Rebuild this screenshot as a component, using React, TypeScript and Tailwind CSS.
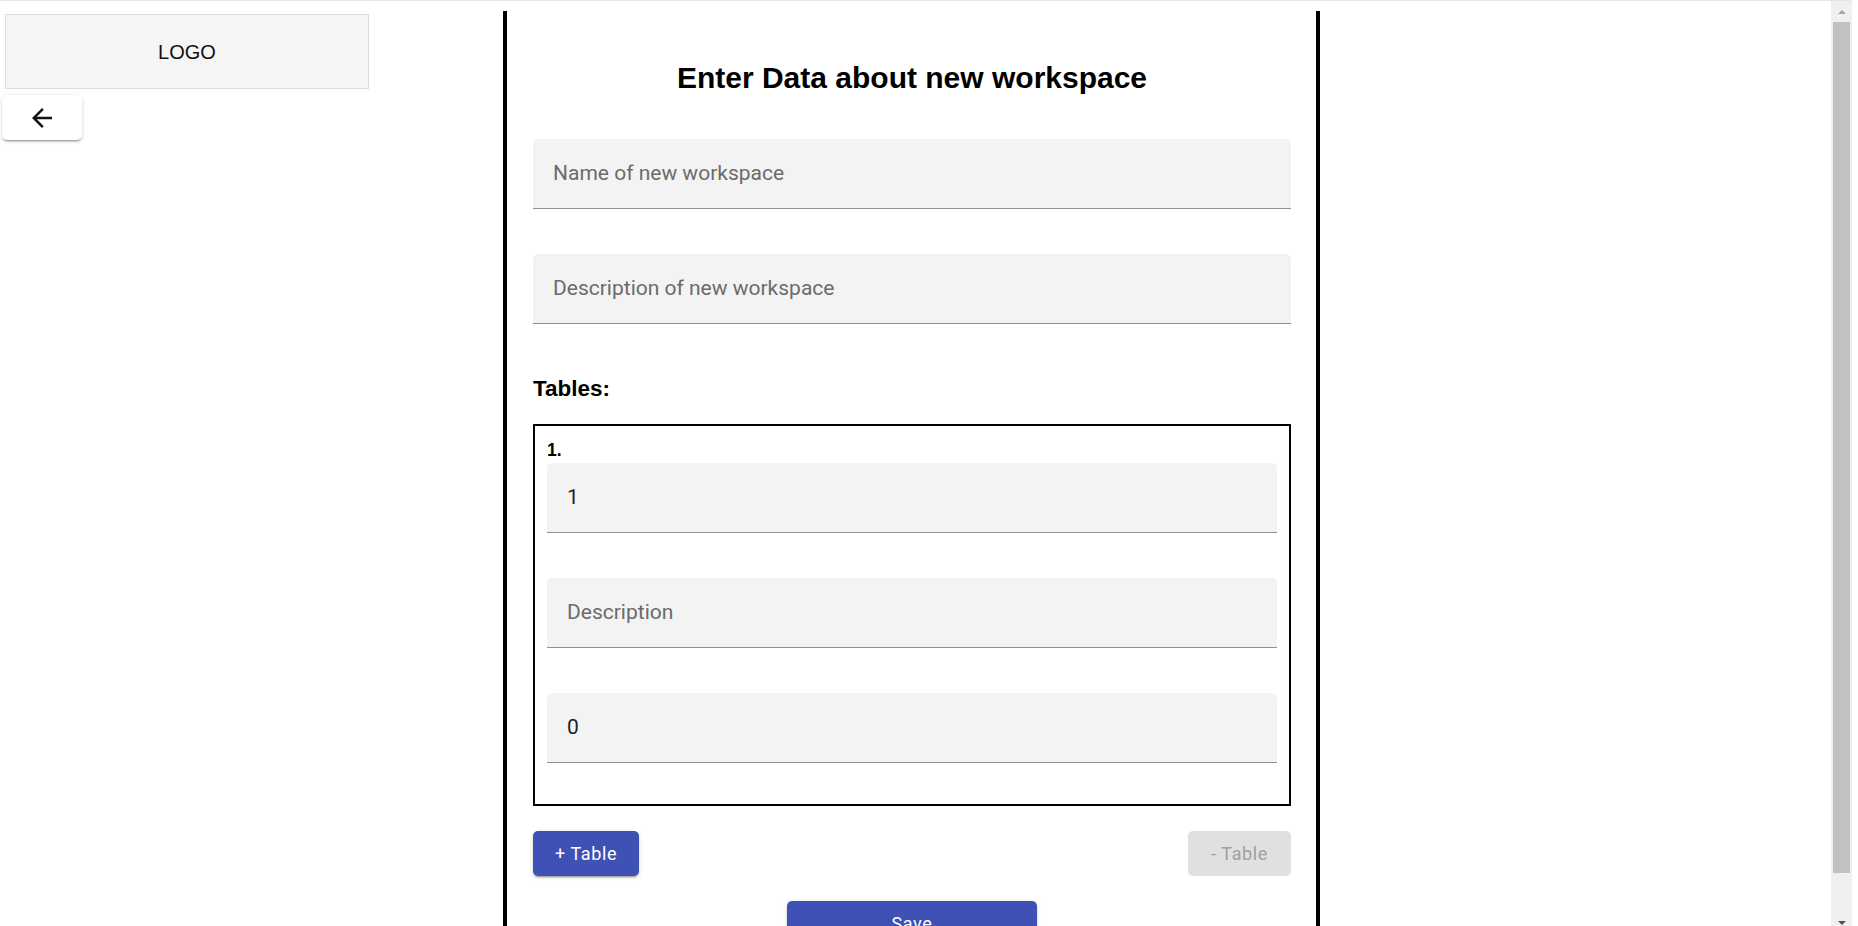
import React from 'react';

const ARIAL = { fontFamily: '"Liberation Sans", Arial, sans-serif' };

function FilledField({ label, value }: { label?: string; value?: string }) {
  return (
    <div className="h-[70px] w-full rounded-t-[5px] bg-[#f3f3f3] border-b border-[#8f8f8f] flex items-center pl-[20px]">
      {value ? (
        <span className="text-[21px] text-[#222222] font-['Roboto',sans-serif]">{value}</span>
      ) : (
        <span className="text-[21px] text-[#6b6b6b] font-['Roboto',sans-serif]">{label}</span>
      )}
    </div>
  );
}

function Scrollbar() {
  return (
    <div className="w-[21px] h-full bg-[#f0f0f0] flex flex-col items-center">
      {/* UP ARROW */}
      <div className="h-[21px] w-full flex items-center justify-center">
        <div className="w-0 h-0 border-x-[4px] border-x-transparent border-b-[4px] border-b-[#a3a3a3]" />
      </div>
      {/* THUMB */}
      <div className="w-[17px] h-[851px] bg-[#c1c1c1]" />
      <div className="flex-1" />
      {/* DOWN ARROW */}
      <div className="h-[10px] w-full flex items-start justify-center pt-[5px]">
        <div className="w-0 h-0 border-x-[4px] border-x-transparent border-t-[4px] border-t-[#505050]" />
      </div>
    </div>
  );
}

export default function App() {
  return (
    <div className="w-[1858px] h-[926px] overflow-hidden bg-white flex flex-col">
      {/* TOP LINE */}
      <div className="h-px w-[1852px] bg-[#e6e6e6] shrink-0" />

      <div className="flex flex-1 min-h-0">
        <div className="w-[1831px] flex min-h-0">
          {/* LEFT COLUMN */}
          <div className="w-[503px] shrink-0 flex flex-col items-start">
            <div
              className="ml-[5px] mt-[13px] w-[364px] h-[75px] bg-[#f5f5f5] border border-[#dcdcdc] flex items-center justify-center text-[20px] text-[#111111]"
              style={ARIAL}>
              LOGO
            </div>
            <button
              type="button"
              aria-label="Back"
              className="ml-[2px] mt-[6px] w-[80px] h-[45px] rounded-[5px] bg-white flex items-center justify-center shadow-[0_3px_1px_-2px_rgba(0,0,0,0.2),0_2px_2px_0_rgba(0,0,0,0.14),0_1px_5px_0_rgba(0,0,0,0.12)]">
              <svg width="30" height="30" viewBox="0 0 24 24" fill="#111111">
                <path d="M20 11H7.83l5.59-5.59L12 4l-8 8 8 8 1.41-1.41L7.83 13H20v-2z" />
              </svg>
            </button>
          </div>

          {/* FORM PANEL */}
          <div className="w-[817px] shrink-0 mt-[10px] border-x-4 border-black pl-[26px] pr-[25px] pt-[49px] flex flex-col">
            <h1 className="text-[30px] leading-[36px] font-bold text-black text-center" style={ARIAL}>
              Enter Data about new workspace
            </h1>

            <div className="mt-[43px]">
              <FilledField label="Name of new workspace" />
            </div>
            <div className="mt-[45px]">
              <FilledField label="Description of new workspace" />
            </div>

            <div className="mt-[51px] text-[22.5px] leading-[27px] font-bold text-black" style={ARIAL}>
              Tables:
            </div>

            {/* TABLES BOX */}
            <div className="mt-[22px] border-2 border-black px-[12px] pt-[12px] pb-[41px]">
              <div className="h-[25px] text-[17.5px] leading-[25px] font-bold text-black" style={ARIAL}>
                1.
              </div>
              <FilledField value="1" />
              <div className="mt-[45px]">
                <FilledField label="Description" />
              </div>
              <div className="mt-[45px]">
                <FilledField value="0" />
              </div>
            </div>

            {/* TABLE BUTTONS */}
            <div className="mt-[25px] flex justify-between">
              <button
                type="button"
                className="h-[45px] w-[106px] rounded-[5px] bg-[#3f51b5] text-white text-[18px] font-normal tracking-[0.6px] font-['Roboto',sans-serif] shadow-[0_3px_1px_-2px_rgba(0,0,0,0.2),0_2px_2px_0_rgba(0,0,0,0.14),0_1px_5px_0_rgba(0,0,0,0.12)]">
                + Table
              </button>
              <button
                type="button"
                disabled
                className="h-[45px] w-[103px] rounded-[5px] bg-[#e0e0e0] text-[#a0a0a0] text-[18px] font-normal tracking-[0.6px] font-['Roboto',sans-serif]">
                - Table
              </button>
            </div>

            {/* SAVE */}
            <div className="mt-[25px] flex justify-center">
              <button
                type="button"
                className="h-[45px] w-[250px] rounded-[5px] bg-[#3f51b5] text-white text-[18px] font-normal tracking-[0.6px] font-['Roboto',sans-serif] shadow-[0_3px_1px_-2px_rgba(0,0,0,0.2),0_2px_2px_0_rgba(0,0,0,0.14),0_1px_5px_0_rgba(0,0,0,0.12)]">
                Save
              </button>
            </div>
          </div>

          <div className="flex-1" />
        </div>

        <Scrollbar />
        <div className="w-[6px] bg-white" />
      </div>
    </div>
  );
}
